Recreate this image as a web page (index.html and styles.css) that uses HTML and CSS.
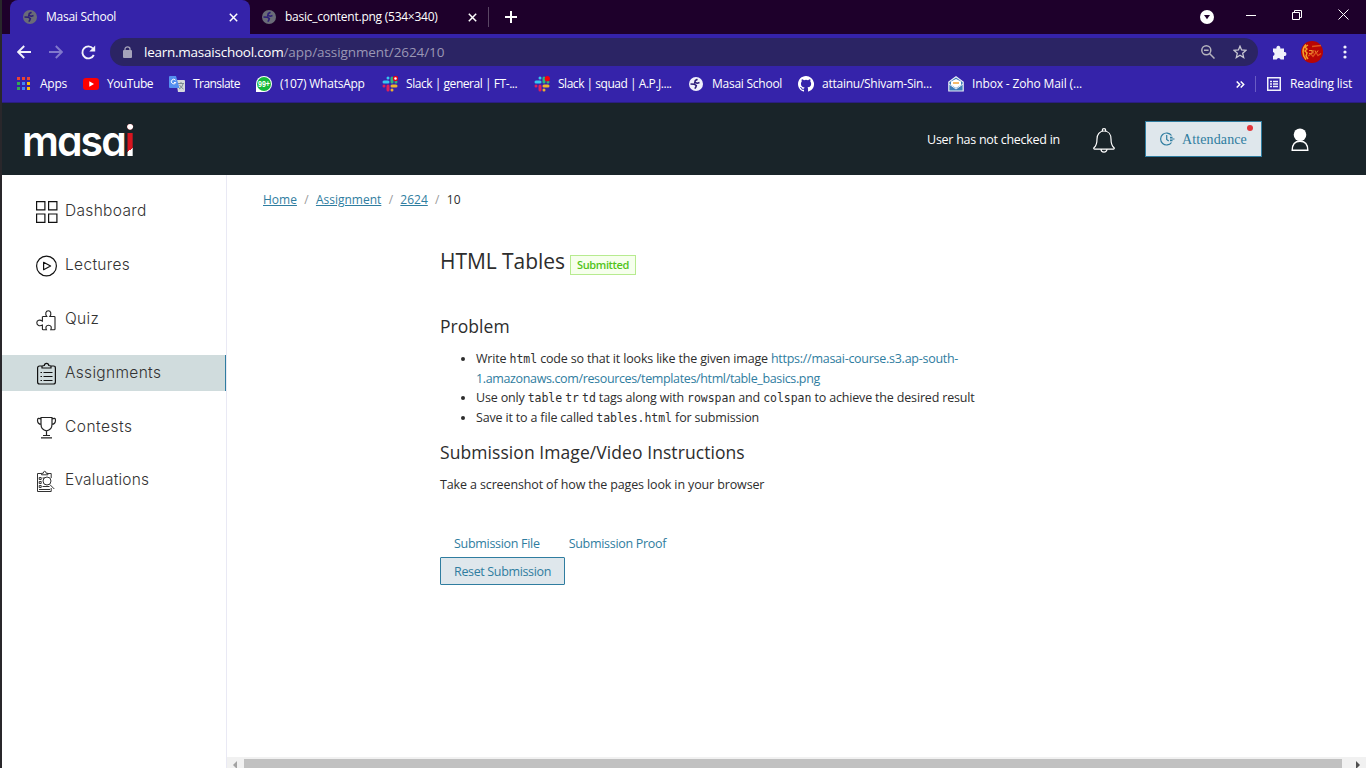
FILE: index.html
```html
<!DOCTYPE html>
<html lang="en">
<head>
<meta charset="utf-8">
<title>Masai School</title>
<link rel="stylesheet" href="styles.css">
</head>
<body>
<svg width="0" height="0" class="defs">
  <symbol id="globe" viewBox="0 0 16 16"><circle cx="8" cy="8" r="7" fill="currentColor"/><path class="land" d="M9.500 3.300 7.300 4.600 6.800 6.600 9.500 7.200 11.500 6.500M2.500 8 6.300 8.200 8.300 9.600 7.800 11.200 6.800 12.600" fill="none" stroke-width="1.600"/></symbol>
  <symbol id="slack" viewBox="0 0 16 16"><g stroke-width="3" stroke-linecap="round"><path d="M6 2v0M2 6h4" stroke="#36c5f0"/><path d="M10 2v4M14 6v0" stroke="#2eb67d"/><path d="M10 10h4M10 14v0" stroke="#ecb22e"/><path d="M6 10v4M2 10v0" stroke="#e01e5a"/></g></symbol>
</svg>
<div class="window">
  <div class="tabs">
    <div class="tab active"><svg class="fav" width="16" height="16"><use href="#globe"/></svg><span class="t-tab1">Masai School</span><svg class="x" width="9" height="9" viewBox="0 0 9 9"><path d="M.8.8l7.400 7.400M8.200.8.8 8.200"/></svg></div>
    <div class="tab idle"><svg class="fav" width="16" height="16"><use href="#globe"/></svg><span class="t-tab2">basic_content.png (534×340)</span><svg class="x" width="9" height="9" viewBox="0 0 9 9"><path d="M.8.8l7.400 7.400M8.200.8.8 8.200"/></svg></div>
    <svg class="plus" width="12" height="12" viewBox="0 0 12 12"><path d="M6 0v12M0 6h12" stroke="#fff" stroke-width="2"/></svg>
    <div class="controls">
      <svg width="14" height="14" viewBox="0 0 14 14"><circle cx="7" cy="7" r="7" fill="#fff"/><path d="M4 5h6L7 9.200z" fill="#1e002b"/></svg>
      <svg class="min" width="10" height="10"><path d="M0 5.500h10" stroke="#fff"/></svg>
      <svg class="max" width="10" height="10" fill="none" stroke="#fff"><path d="M.5 2.500h7v7h-7zM2.500 2V.5h7v7H8"/></svg>
      <svg class="cls" width="11" height="11" stroke="#fff"><path d="M.5.5l10 10M10.500.5l-10 10"/></svg>
    </div>
  </div>
  <div class="toolbar">
    <svg class="nav" width="14" height="14" viewBox="0 0 14 14"><path d="M14 7H1.500M7.200 1 1.200 7l6 6"/></svg>
    <svg class="nav dim" width="14" height="14" viewBox="0 0 14 14"><path d="M0 7h12.500M6.800 1l6 6-6 6"/></svg>
    <svg class="nav" width="15" height="15" viewBox="0 0 15 15"><path d="M12.800 10A6 6 0 1 1 12 3.500"/><path d="M14.200.6v6H8.300z" fill="#f1f1fb" stroke="none"/></svg>
    <div class="omni">
      <svg width="9" height="12" viewBox="0 0 9 12"><rect y="4" width="9" height="8" rx="1" fill="#a5a3ba"/><path d="M2 5V3a2.500 2.200 0 0 1 5 0v2" fill="none" stroke="#a5a3ba" stroke-width="1.300"/></svg>
      <span class="url"><span class="t-host">learn.masaischool.com</span><span class="t-path">/app/assignment/2624/10</span></span>
      <svg class="mag" width="14" height="14" viewBox="0 0 14 14" fill="none" stroke="#b5b3bd" stroke-width="1.500"><circle cx="5.300" cy="5.300" r="4.500"/><path d="M3 5.300h4.600M8.500 8.500l5 5"/></svg>
      <svg class="star" width="14" height="14" viewBox="0 0 14 14" fill="none" stroke="#c9c8d2" stroke-width="1.300"><path d="M7 1.200 8.600 5l4.300.4-3.200 2.900 1 4.300L7 10.300l-3.700 2.300 1-4.300L1.100 5.400 5.400 5z"/></svg>
    </div>
    <svg class="ext" width="15" height="15" viewBox="0 0 15 15"><path d="M1 3.500h3.500a2 2 0 1 1 3.700 0H12V7a2 2 0 1 1 0 3.900v3.600H8.600a2 2 0 0 0-3.900 0H1V11a2 2 0 0 0 0-3.900z" fill="#f1f1fb"/></svg>
    <svg class="avatar" width="22" height="22" viewBox="0 0 22 22"><circle cx="11" cy="11" r="11" fill="#b80505"/><g fill="none" stroke="#f5a32c"><path d="M5 3.500c-4 4-4 10 0 15" stroke-width="1.600"/><path d="M7 4 4 6l2 2-2 2 2 2-1 3 2 3" stroke-width="1.400"/><path d="M8 9.500h3v3H8M12 9v3.500M14 9.500l1 3 2-3" stroke="#ee9436"/><path d="M11 5.500l9-1M7 15l3-2 2 2.500 3-4 2 3 3-2" stroke="#e0521c" stroke-width="1.300"/></g></svg>
    <svg class="dots" width="4" height="14" fill="#f1f1fb"><circle cx="2" cy="2" r="1.600"/><circle cx="2" cy="7" r="1.600"/><circle cx="2" cy="12" r="1.600"/></svg>
  </div>
  <div class="bookmarks">
    <div class="bm"><svg width="16" height="16"><path d="M1 1h3v3H1zM6 1h3v3H6zM11 1h3v3h-3z" fill="#ea4335"/><path d="M1 6h3v3H1zM1 11h3v3H1z" fill="#34a853"/><path d="M6 6h3v3H6zM6 11h3v3H6z" fill="#4285f4"/><path d="M11 6h3v3h-3zM11 11h3v3h-3z" fill="#fbbc05"/></svg><span class="t-apps">Apps</span></div>
    <div class="bm"><svg width="16" height="16"><rect y="2" width="16" height="12" rx="3" fill="#f00"/><path d="M6.300 5.300v5.400L11 8z" fill="#fff"/></svg><span class="t-yt">YouTube</span></div>
    <div class="bm"><svg width="16" height="16"><path d="M7 4h8q1 0 1 1v10q0 1-1 1H9z" fill="#d5d8dc"/><path d="M9 7.500h6M12 6v2M14 8q-1 4-4 5M10.500 9q2 3 4 4" stroke="#7d8a93" fill="none"/><path d="M1 0h6l3.500 12H1q-1 0-1-1V1q0-1 1-1z" fill="#5490f0"/><path d="M6.500 4.200a2.300 2.300 0 1 0 .3 2.300H5" fill="none" stroke="#fff"/></svg><span class="t-tr">Translate</span></div>
    <div class="bm"><svg width="16" height="16"><path d="M0 16V8a8 8 0 1 1 8 8z" fill="#fff"/><circle cx="8" cy="8" r="7" fill="#15b93b"/><text x="2" y="11.300" textLength="12" lengthAdjust="spacingAndGlyphs" class="badge99">99+</text></svg><span class="t-wa">(107) WhatsApp</span></div>
    <div class="bm"><svg width="16" height="16"><use href="#slack"/><circle cx="13.500" cy="2.500" r="2" fill="#fff" stroke="#e00018" stroke-width="1.400"/></svg><span class="t-s1">Slack | general | FT-...</span></div>
    <div class="bm"><svg width="16" height="16"><use href="#slack"/><circle cx="13.300" cy="2.700" r="2.600" fill="#f2000c"/></svg><span class="t-s2">Slack | squad | A.P.J....</span></div>
    <div class="bm"><svg class="white" width="16" height="16"><use href="#globe"/></svg><span class="t-ms">Masai School</span></div>
    <div class="bm"><svg width="16" height="16" viewBox="0 0 16 16"><path fill="#fff" d="M8 0C3.580 0 0 3.580 0 8c0 3.540 2.290 6.530 5.470 7.590.4.070.55-.17.55-.38v-1.490c-2.010.37-2.530-.49-2.690-.94-.09-.23-.48-.94-.82-1.130-.28-.15-.68-.52-.01-.53.63-.01 1.080.58 1.230.82.72 1.210 1.870.87 2.330.66.07-.52.28-.87.51-1.070-1.780-.2-3.640-.89-3.640-3.950 0-.87.31-1.590.82-2.150-.08-.2-.36-1.020.08-2.120 0 0 .67-.21 2.200.82a7.400 7.400 0 0 1 4 0c1.530-1.040 2.200-.82 2.200-.82.44 1.100.16 1.920.08 2.120.51.56.82 1.270.82 2.150 0 3.070-1.870 3.750-3.650 3.950.29.25.54.73.54 1.480v2.200c0 .21.15.46.55.38A8 8 0 0 0 8 0z"/></svg><span class="t-gh">attainu/Shivam-Sin...</span></div>
    <div class="bm"><svg width="16" height="16"><path d="M.8 6 8 .8 15.200 6v9H.8z" fill="#3d7dbb" stroke="#e9edf5" stroke-width="1.200"/><path d="M3 5.500 8 3l5 2.500V9l-5 3-5-3z" fill="#fff"/><path d="M5 7h6" stroke="#f2a33a" stroke-width="1.500"/><path d="M1 8l7 5 7-5" fill="none" stroke="#e9edf5"/></svg><span class="t-zo">Inbox - Zoho Mail (...</span></div>
    <div class="bm-end"><svg width="9" height="7" viewBox="0 0 9 7"><path d="M.7.500l3 3-3 3M4.700.500l3 3-3 3" fill="none" stroke="#fff" stroke-width="1.500"/></svg><i></i><svg width="14" height="14" fill="none" stroke="#f1f1fb"><rect x=".75" y=".75" width="12.500" height="12.500" stroke-width="1.500"/><path d="M3 4.500h2M6 4.500h5M3 7h2M6 7h5M3 9.500h2M6 9.500h5" stroke-width="1.400"/></svg><span class="t-rl">Reading list</span></div>
  </div>
  <header class="app-head">
    <div class="logo">masa<span>i</span></div>
    <span class="t-user">User has not checked in</span>
    <svg class="bell" width="22" height="25" viewBox="0 0 22 25" fill="none" stroke="#fff" stroke-width="1.200"><path d="M9.300 3V2.300a1.700 1.700 0 0 1 3.400 0V3M11 3c-4.500 0-7 3.500-7 8 0 5-1 7-2.800 8.500-.8.700-.5 1.700.6 1.700h18.400c1.100 0 1.400-1 .6-1.700C19 18 18 16 18 11c0-4.500-2.500-8-7-8zM8 21.300a3 2.800 0 0 0 6 0"/></svg>
    <div class="attend"><svg width="15" height="14" viewBox="0 0 15 14" fill="none" stroke="#2f7da0" stroke-width="1.200"><path d="M11.500 3.500A6 6 0 1 0 11.500 10.500M6.700 3v4.500l2 1.500M10 5.300h2.500M10 7h4.500M10 8.700h2.500"/></svg><span class="t-att">Attendance</span><b></b></div>
    <svg class="user" width="18" height="24" viewBox="0 0 18 24"><circle cx="9" cy="6.800" r="6.300" fill="#fff"/><path d="M1.200 22.300c0-5 2.300-9 7.800-9s7.800 4 7.800 9z" fill="none" stroke="#fff" stroke-width="1.400"/></svg>
  </header>
  <div class="body">
    <nav class="side">
      <a><svg width="22" height="23" fill="none" stroke="#111" stroke-width="1.200"><path d="M.6 1.600h8.300v8.300H.6zM12.600 1.600h8.300v8.300h-8.300zM.6 14h8.300v8.300H.6zM12.600 14h8.300v8.300h-8.300z"/></svg><span class="t-d">Dashboard</span></a>
      <a><svg width="22" height="23" fill="none" stroke="#111" stroke-width="1.200"><circle cx="10.500" cy="12" r="9.900"/><path d="M7.600 8.300v7.400l7-3.700z" stroke-linejoin="round"/></svg><span class="t-l">Lectures</span></a>
      <a><svg width="22" height="23" fill="none" stroke="#222" stroke-width="1.100"><path d="M6.500 8.500h4.300C8.800 6 9.800 2.700 12.300 2.700s3.500 3.300 1.500 5.800h4.400q.8 0 .8.800v11.600q0 .8-.8.800h-3.400c1.200-2.600.2-4.500-2.200-4.500s-3.400 1.900-2.200 4.500H7.200q-.8 0-.8-.8v-3.800C3.700 18.400.8 17.500.8 14.800s3-3.500 5.600-1.700V8.500"/></svg><span class="t-q">Quiz</span></a>
      <a class="on"><svg width="22" height="23" fill="none" stroke="#111" stroke-width="1.200"><path d="M6 4H3.500Q1.600 4 1.600 6v14q0 2 2 2h13.800q2 0 2-2V6q0-2-2-2H15M6 6V4q1.200-.4 2.300-.5C8.500.7 12.600.7 12.800 3.500Q14 3.600 15 4v2zM4.500 10.500H6M7.500 10.500h9M4.500 14.500H6M7.500 14.500h9M4.500 18.500H6M7.500 18.500h9"/></svg><span class="t-a">Assignments</span></a>
      <a><svg width="22" height="23" fill="none" stroke="#222" stroke-width="1.200"><path d="M5 1.500h11v6.800c0 4-2 6-5.500 6.500C7 14.300 5 12.300 5 8.300zM5 3Q1.500 1.200 1.500 4.200 1.500 8 5.500 8.500M16 3q3.500-1.800 3.500 1.200 0 3.800-4 4.300M10.500 15v4.500M7 19.500h7M5 21.800h11"/></svg><span class="t-c">Contests</span></a>
      <a><svg width="22" height="23" fill="none" stroke="#333" stroke-width="1"><path d="M5.500 3.500h-4v18h13.700V18M15.200 8V3.500h-4M5.500 4.800V3.300h1.700q.2-2 1.500-2t1.500 2h1.700v1.500zM3.200 7.500h2v2h-2zM3.200 11.500h2v2h-2zM3.200 15.500h2v2h-2zM6.500 8h2M6.500 16.500h7M3 19.500h11M13.800 14.500l4.500 4.500"/><circle cx="11" cy="11" r="4"/></svg><span class="t-e">Evaluations</span></a>
    </nav>
    <main class="main">
      <div class="crumbs"><a>Home</a><i>/</i><a>Assignment</a><i>/</i><a>2624</a><i>/</i><span>10</span></div>
      <section class="content">
        <div class="title"><h1>HTML Tables</h1><span class="tag">Submitted</span></div>
        <h2>Problem</h2>
        <ul>
          <li>Write <code>html</code> code so that it looks like the given image <a>https://masai-course.s3.ap-south-<br><span class="tail">1.amazonaws.com/resources/templates/html/table_basics.png</span></a></li>
          <li>Use only <code>table</code> <code>tr</code> <code>td</code> tags along with <code>rowspan</code> and <code>colspan</code> to achieve the desired result</li>
          <li>Save it to a file called <code>tables.html</code> for submission</li>
        </ul>
        <h2 class="second">Submission Image/Video Instructions</h2>
        <p>Take a screenshot of how the pages look in your browser</p>
        <div class="links"><a>Submission File</a><a>Submission Proof</a></div>
        <button class="reset">Reset Submission</button>
      </section>
      <div class="hbar"><svg width="17" height="11"><path d="M10 4v8L6 8z" fill="#a3a3a3"/></svg><div></div><svg width="24" height="11"><path d="M14 4v8l4-4z" fill="#505050"/></svg></div>
    </main>
  </div>
</div>
</body>
</html>
```
FILE: styles.css
```css
*{box-sizing:border-box}
body{margin:0;width:1366px;height:768px;overflow:hidden;background:#29272b;font-family:"Open Sans","Noto Sans",sans-serif;font-size:12px;color:#fff}
svg{display:block;flex:none}
.defs{position:absolute}
.window{margin-left:2px;height:768px;display:flex;flex-direction:column;white-space:nowrap}
.tabs{height:34px;background:#1e002b;display:flex;align-items:center;padding-left:8px}
.tab{height:34px;display:flex;align-items:center;padding:0 12px;color:#fff;letter-spacing:-.25px}
.tab .fav{color:#6a6b78;margin-right:8px}
.land{stroke:#2c1d78}
.tab span{margin-top:-1px}
.tab .x{stroke:#fff;stroke-width:1.5;margin-left:auto}
.active{width:240px;background:#3523aa;border-radius:8px 8px 0 0}
.idle{width:239px;height:20px;border-right:1px solid #5a4664;padding:0 11px 0 11px}
.plus{margin-left:16px}
.controls{margin-left:auto;display:flex;align-items:center;padding-right:17px}
.min{margin:-5px 0 0 32px}
.max{margin:-5px 0 0 36px}
.cls{margin:-5px 0 0 36px}
.toolbar{height:36px;background:#3523aa;display:flex;align-items:center;padding-left:15px}
.nav{fill:none;stroke:#f1f1fb;stroke-width:1.9;margin-right:18px}
.nav.dim{stroke:#8178cc}
.omni{margin-left:-4px;height:28px;width:1148px;border-radius:14px;background:#2b2464;display:flex;align-items:center;padding:0 11px 0 13px}
.url{font-size:13.5px;margin-left:12px;display:flex;margin-top:-1px}
.t-host{letter-spacing:-.245px}
.t-path{color:#9a97b5;letter-spacing:-.08px}
.mag{margin-left:auto;margin-right:18px}
.ext{margin-left:14px}
.avatar{margin-left:14px}
.dots{margin-left:20px}
.bookmarks{height:32px;background:#3523aa;display:grid;grid-template-columns:67px 86px 87px 126px 152px 154px 110px 150px 1fr auto;align-items:center;padding:0 14px 4px}
.bm{display:flex;align-items:center;gap:8px}
.bm span,.bm-end span{margin-top:-2px}
.white{color:#f1f1fb}
.t-apps,.t-ms,.t-gh,.t-wa{letter-spacing:-.25px}
.t-yt,.t-s2{letter-spacing:-.475px}
.t-tr{letter-spacing:-.55px}
.t-s1{letter-spacing:-.45px}
.t-zo{letter-spacing:-.14px}
.badge99{font:bold 9px "Liberation Sans",sans-serif;fill:#fff}
.bm-end{display:flex;align-items:center}
.bm-end i{width:1px;height:16px;background:#6a5cc4;margin:0 11px 0 10px}
.t-rl{margin-left:9px;letter-spacing:-.19px}
.app-head{height:73px;background:#192429;border-top:1px solid #2a1d80;display:flex;align-items:center}
.logo{font:600 41px/50px Inter,sans-serif;font-feature-settings:"cv11";letter-spacing:-1.95px;margin-left:20px;margin-top:3px}
.logo span{padding-right:3px;background:linear-gradient(#fff 17px,transparent 17px),linear-gradient(145deg,#d8151f 64%,#fff 64%);-webkit-background-clip:text;background-clip:text;color:transparent}
.t-user{margin-left:auto;font-size:12.5px;letter-spacing:-.27px}
.bell{margin:2px 0 0 33px}
.attend{position:relative;width:117px;height:36px;background:#dfe7ec;border:1px solid #2f7da0;margin-left:30px;display:flex;align-items:center;padding-left:14px;color:#2f7da0;font:14px "Liberation Serif",serif}
.attend b{position:absolute;right:8px;top:3px;width:6px;height:6px;border-radius:3px;background:#e2343a}
.t-att{margin:2px 0 0 7px;letter-spacing:.12px}
.user{margin:1px 57px 0 29px}
.body{flex:1;min-height:0;display:flex;background:#fff}
.side{width:225px;border-right:1px solid #e9e9f4;padding-top:18px;display:flex;flex-direction:column;gap:18px}
.side a{height:36px;display:flex;align-items:center;padding-left:34px;gap:7px;color:#333;font:300 15.5px Inter,sans-serif;letter-spacing:.33px}
.side span{margin-top:-1px}
.side a.on{background:#d0dcdd;border-right:1px solid #2f7da0}
.t-c{letter-spacing:.5px}
.side .t-e{letter-spacing:.2px;margin-top:-3px}
.main{flex:1;display:flex;flex-direction:column;color:#2d2d2d}
.crumbs{display:flex;margin:15px 0 0 36px;height:20px;line-height:20px}
.crumbs a{color:#2f7da0;text-decoration:underline}
.crumbs i{font-style:normal;color:#999;width:19px;text-align:center}
.content{margin:31px 0 0 213px;font-size:12.5px;line-height:20px}
.title{display:flex;height:40px;align-items:center}
h1{font-size:21px;font-weight:400;margin:0 5px 0 0;line-height:36px;letter-spacing:-.05px}
.tag{height:20px;margin-top:7px;border:1px solid #b7eb8f;background:#f6ffed;color:#52c41a;font-size:11px;font-weight:600;line-height:18px;padding:0 6px;letter-spacing:-.37px;width:66px}
h2{font-size:17.5px;font-weight:500;margin:32px 0 0;line-height:26px;letter-spacing:.04px}
ul{margin:10px 0 0;padding:0 0 0 36px;letter-spacing:-.17px}
li{line-height:19.7px}
li a{color:#2f7da0;letter-spacing:-.27px}
.tail{letter-spacing:-.36px}
.links a{color:#2f7da0;letter-spacing:-.3px}
code{font:11.5px "DejaVu Sans Mono",monospace;letter-spacing:-.04px}
h2.second{margin-top:11px;letter-spacing:.07px}
p{margin:10px 0 0;letter-spacing:-.13px}
.links{margin:39px 0 0 14px;display:flex;gap:29px}
.reset{display:block;margin:3px 0 0;width:125px;height:28px;border:1px solid #2f7da0;background:#dfe7ec;border-radius:1px;color:#2f7da0;padding:1px 0 0;font:12.5px "Open Sans",sans-serif;letter-spacing:-.35px}
.hbar{margin-top:auto;height:11px;background:#f1f1f1;display:flex}
.hbar div{flex:1;background:#c1c1c1;margin-top:2px}
```
